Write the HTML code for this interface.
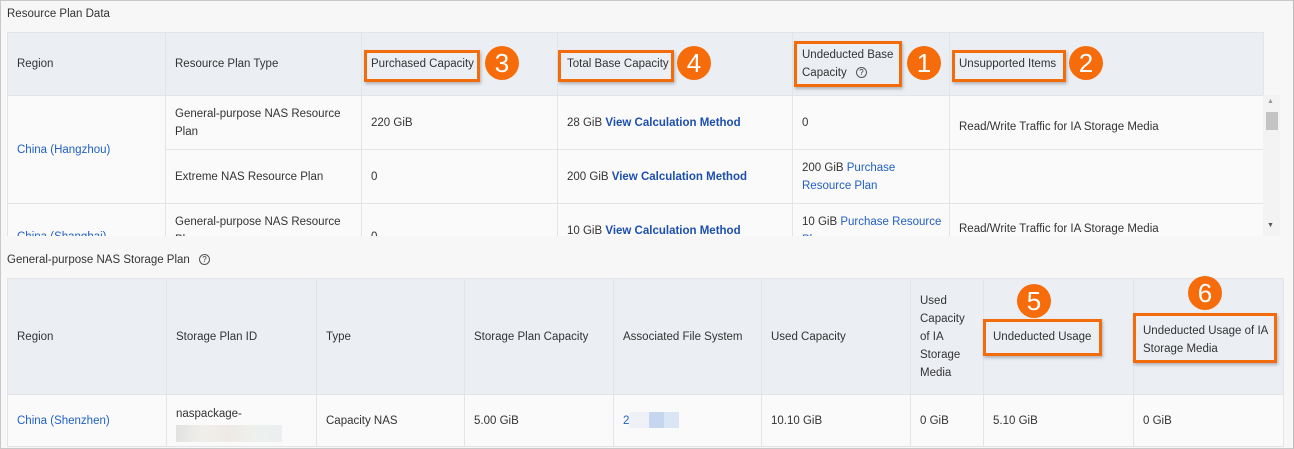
<!DOCTYPE html>
<html><head><meta charset="utf-8"><style>
*{box-sizing:border-box;margin:0;padding:0}
body{width:1294px;height:449px;background:#f7f7f7;font-family:"Liberation Sans",Arial,sans-serif;font-size:11.5px;color:#333;position:relative;overflow:hidden}
.frame{position:absolute;left:0;top:0;width:1294px;height:449px;border:1px solid #c8c8c8;border-right-color:#bbb}
.abs{position:absolute}
table{border-collapse:collapse;table-layout:fixed;position:absolute}
td,th{border:1px solid #e2e4e8;padding:0 9px;text-align:left;font-weight:normal;vertical-align:middle;line-height:18px;font-size:11.5px}
th{background:#ebeef3;color:#333}
td{background:#fafafa}
a,.lk{color:#2160c4;text-decoration:none}
.b{color:#1d4fae;font-weight:bold}
.box{position:absolute;border:3px solid #f36c0c;box-shadow:1px 2px 3px rgba(0,0,0,.25)}
.c{position:absolute;width:34px;height:34px;border-radius:50%;background:#f66b0a;color:#fff;font-size:26px;text-align:center;line-height:34px}
.q{display:inline-block;width:11px;height:11px;border:1px solid #555;border-radius:50%;font-size:8px;line-height:9px;text-align:center;vertical-align:middle;margin-left:6px}
</style></head><body>
<div class="frame"></div>
<div class="abs" style="left:7px;top:8px">Resource Plan Data</div>

<table style="left:7px;top:32px;width:1256px">
<colgroup><col style="width:158px"><col style="width:196px"><col style="width:196px"><col style="width:235px"><col style="width:157px"><col style="width:314px"></colgroup>
<tr style="height:63px"><th>Region</th><th>Resource Plan Type</th><th>Purchased Capacity</th><th>Total Base Capacity</th><th>Undeducted Base Capacity <span class="q">?</span></th><th>Unsupported Items</th></tr>
</table>
<div class="abs" style="left:7px;top:95px;width:1256px;height:141px;overflow:hidden">
<table style="left:0;top:0;width:1256px">
<colgroup><col style="width:158px"><col style="width:196px"><col style="width:196px"><col style="width:235px"><col style="width:157px"><col style="width:314px"></colgroup>
<tr style="height:54px"><td rowspan="2"><span class="lk">China (Hangzhou)</span></td><td>General-purpose NAS Resource Plan</td><td>220 GiB</td><td>28 GiB <span class="b">View Calculation Method</span></td><td>0</td><td style="padding-top:8px">Read/Write Traffic for IA Storage Media</td></tr>
<tr style="height:54px"><td>Extreme NAS Resource Plan</td><td>0</td><td>200 GiB <span class="b">View Calculation Method</span></td><td>200 GiB <span class="lk">Purchase Resource Plan</span></td><td></td></tr>
<tr style="height:54px"><td style="padding-top:12px"><span class="lk">China (Shanghai)</span></td><td style="vertical-align:top;padding-top:9px">General-purpose NAS Resource Plan</td><td style="padding-top:12px">0</td><td>10 GiB <span class="b">View Calculation Method</span></td><td style="vertical-align:top;padding-top:9px;white-space:nowrap">10 GiB <span class="lk">Purchase Resource</span><br><span class="lk">Plan</span></td><td style="vertical-align:top;padding-top:16px">Read/Write Traffic for IA Storage Media</td></tr>
</table></div>
<div class="abs" style="left:1263px;top:95px;width:17px;height:141px;background:#f3f3f3"></div>
<div class="abs" style="left:1266px;top:112px;width:12px;height:18px;background:#c4c4c4"></div>
<div class="abs" style="left:1267px;top:98px;font-size:7px;color:#999">▲</div>
<div class="abs" style="left:1267px;top:222px;font-size:7px;color:#555">▼</div>

<div class="abs" style="left:7px;top:254px">General-purpose NAS Storage Plan <span class="q">?</span></div>
<table style="left:7px;top:278px;width:1276px">
<colgroup><col style="width:159px"><col style="width:150px"><col style="width:148px"><col style="width:149px"><col style="width:148px"><col style="width:149px"><col style="width:73px"><col style="width:150px"><col style="width:150px"></colgroup>
<tr style="height:116px"><th>Region</th><th>Storage Plan ID</th><th>Type</th><th>Storage Plan Capacity</th><th>Associated File System</th><th>Used Capacity</th><th>Used Capacity of IA Storage Media</th><th>Undeducted Usage</th><th style="padding-top:6px">Undeducted Usage of IA Storage Media</th></tr>
<tr style="height:52px"><td><span class="lk">China (Shenzhen)</span></td><td style="vertical-align:top;padding-top:10px">naspackage-<div style="width:106px;height:17px;background:linear-gradient(90deg,#e2e2e2,#f0efea,#efe9e4,#edf1ee,#eceef0);margin-top:2px"></div></td><td>Capacity NAS</td><td>5.00 GiB</td><td><span class="lk">2</span><span style="display:inline-block;width:50px;height:16px;vertical-align:middle;background:linear-gradient(90deg,#eef2f8 0 40%,#c6d6ef 40% 70%,#dbe6f5 70%)"></span></td><td>10.10 GiB</td><td>0 GiB</td><td>5.10 GiB</td><td>0 GiB</td></tr>
</table>

<div class="box" style="left:364px;top:50px;width:116px;height:32px"></div><div class="c" style="left:485px;top:46px">3</div>
<div class="box" style="left:558px;top:50px;width:116px;height:32px"></div><div class="c" style="left:677px;top:46px">4</div>
<div class="box" style="left:794px;top:41px;width:108px;height:46px"></div><div class="c" style="left:907px;top:46px">1</div>
<div class="box" style="left:952px;top:50px;width:114px;height:32px"></div><div class="c" style="left:1069px;top:46px">2</div>
<div class="box" style="left:983px;top:319px;width:119px;height:37px"></div><div class="c" style="left:1017px;top:284px">5</div>
<div class="box" style="left:1133px;top:313px;width:144px;height:50px"></div><div class="c" style="left:1188px;top:276px">6</div>
</body></html>
